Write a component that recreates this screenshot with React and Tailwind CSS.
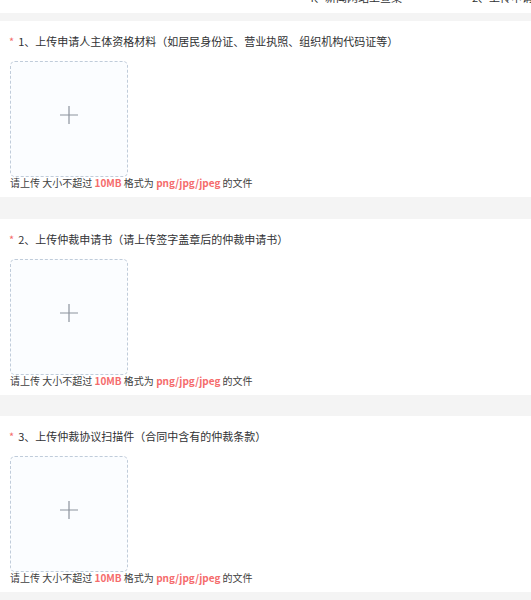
import React from "react";

const font = { fontFamily: '"Noto Sans CJK SC", "Noto Sans", sans-serif' };

function Section({ title }) {
  return (
    <div className="bg-white h-[176px] relative">
      <div className="pt-[13px] pl-[9px] flex items-center h-[27px] text-[11px] leading-[14px] text-[#303133]">
        <span className="text-[#f56c6c] mr-[4px]">*</span>
        <span>{title}</span>
      </div>
      <div className="ml-[10px] mt-[13px] w-[118px] h-[116px] rounded-[5px] border border-dashed border-[#c0ccda] bg-[#fbfdff] flex items-center justify-center pb-[8px]">
        <svg width="20" height="20" viewBox="0 0 20 20">
          <path d="M10 1v18M1 10h18" stroke="#8c939d" strokeWidth="1.2" fill="none" />
        </svg>
      </div>
      <div className="absolute left-[10px] top-[155px] text-[10px] leading-[14px] text-[#404040] whitespace-nowrap">
        请上传 大小不超过 <span className="text-[#f56c6c] font-bold">10MB</span> 格式为{" "}
        <span className="text-[#f56c6c] font-bold">png/jpg/jpeg</span> 的文件
      </div>
    </div>
  );
}

export default function App() {
  return (
    <div className="w-[531px] h-[600px] overflow-hidden bg-white" style={font}>
      <div className="h-[13px] overflow-hidden bg-white relative">
        <div className="absolute top-[-9px] left-[308px] text-[11px] leading-[12px] text-[#303133] whitespace-nowrap">
          4、新闻网站上查案
        </div>
        <div className="absolute top-[-9px] left-[472px] text-[11px] leading-[12px] text-[#303133] whitespace-nowrap">
          2、上传申请
        </div>
      </div>
      <div className="bg-[#f4f4f4] h-[8px]" />
      <Section title="1、上传申请人主体资格材料（如居民身份证、营业执照、组织机构代码证等）" />
      <div className="bg-[#f4f4f4] h-[22px]" />
      <Section title="2、上传仲裁申请书（请上传签字盖章后的仲裁申请书）" />
      <div className="bg-[#f4f4f4] h-[21px]" />
      <Section title="3、上传仲裁协议扫描件（合同中含有的仲裁条款）" />
      <div className="bg-[#f4f4f4] h-[22px]" />
    </div>
  );
}
